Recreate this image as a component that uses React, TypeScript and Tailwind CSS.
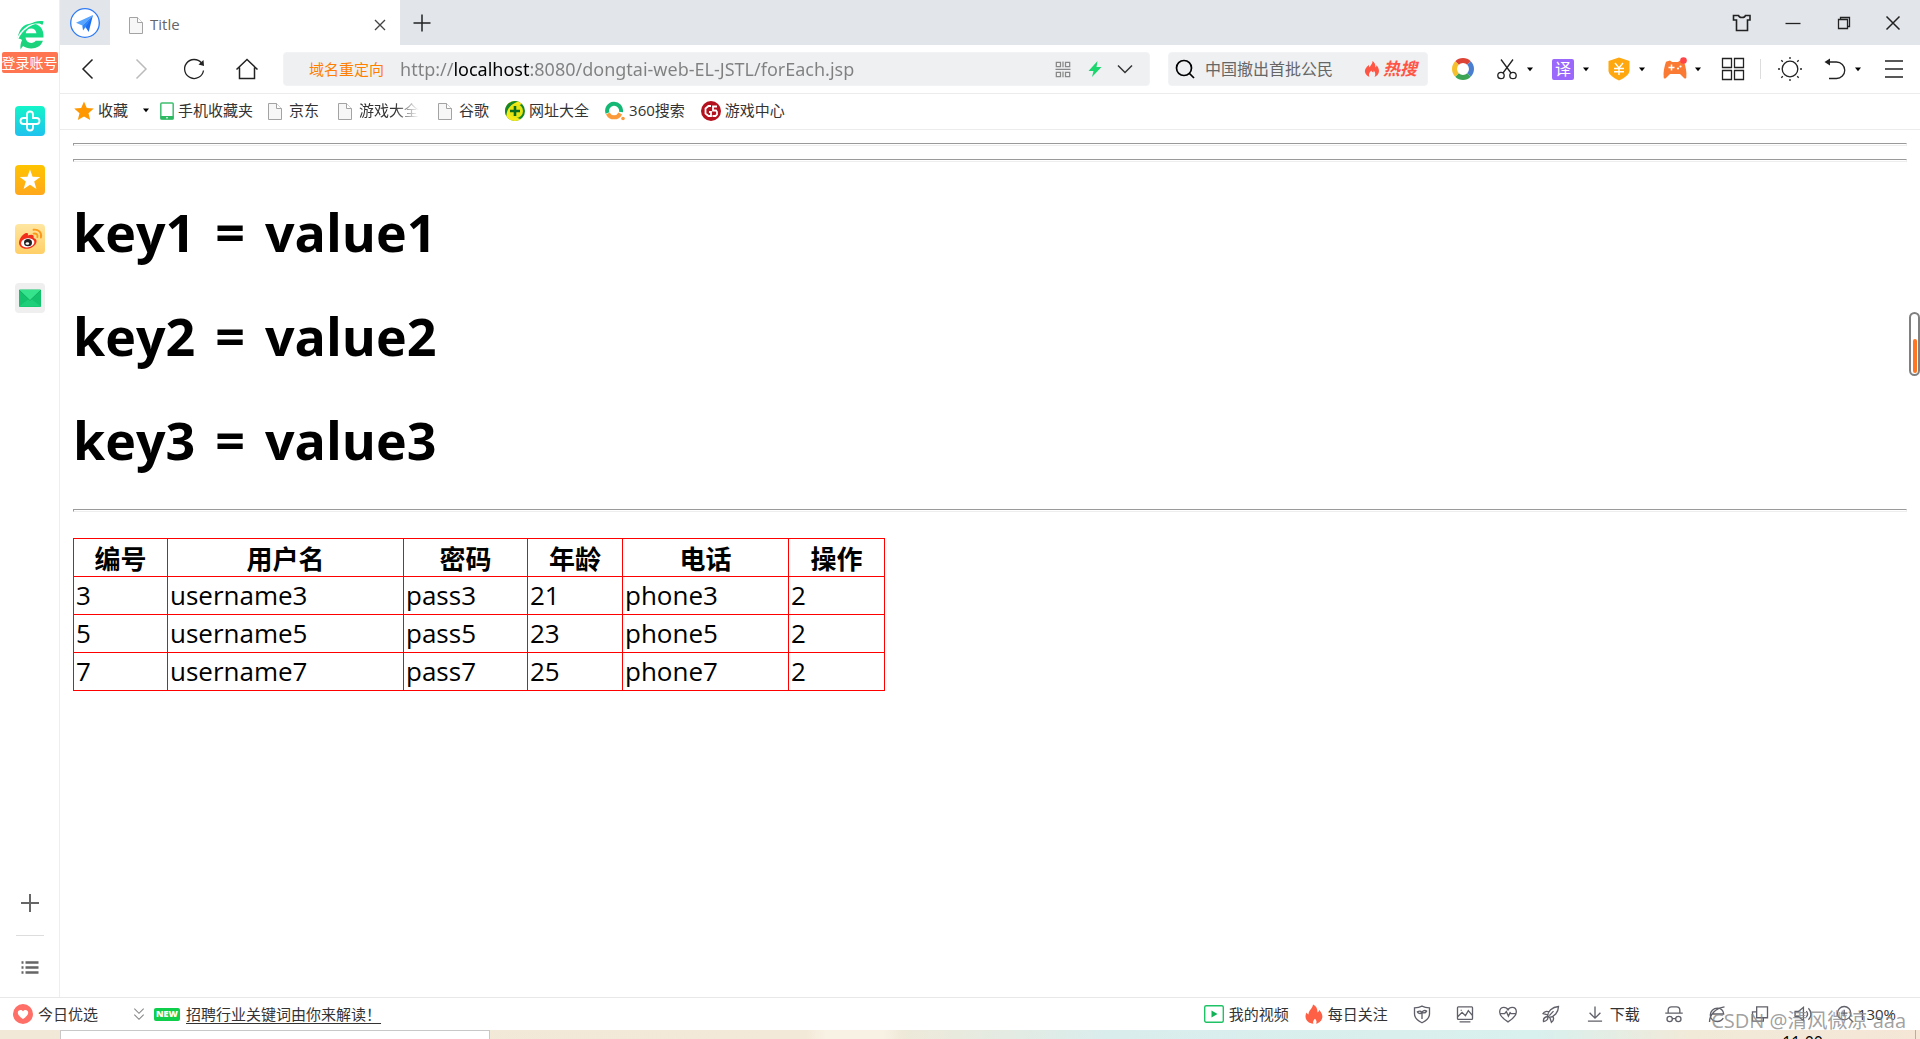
import React from 'react';

interface User {
  id: number;
  username: string;
  password: string;
  age: number;
  phone: string;
  action: number;
}

const users: User[] = [
  { id: 3, username: 'username3', password: 'pass3', age: 21, phone: 'phone3', action: 2 },
  { id: 5, username: 'username5', password: 'pass5', age: 23, phone: 'phone5', action: 2 },
  { id: 7, username: 'username7', password: 'pass7', age: 25, phone: 'phone7', action: 2 },
];

const columns = [
  { label: '编号', width: 'w-[94px]' },
  { label: '用户名', width: 'w-[236px]' },
  { label: '密码', width: 'w-[124px]' },
  { label: '年龄', width: 'w-[95px]' },
  { label: '电话', width: 'w-[166px]' },
  { label: '操作', width: 'w-[96px]' },
];

const entries = [
  { key: 'key1', value: 'value1' },
  { key: 'key2', value: 'value2' },
  { key: 'key3', value: 'value3' },
];

interface IconProps {
  size?: number;
  className?: string;
  width?: number;
  children: React.ReactNode;
}

// Line icon on a 24 unit grid
const Line: React.FC<IconProps> = ({ size = 24, width = 1.3, className = 'text-[#222]', children }) => (
  <svg
    width={size}
    height={size}
    viewBox="0 0 24 24"
    fill="none"
    stroke="currentColor"
    strokeWidth={width}
    className={`shrink-0 ${className}`}
    aria-hidden="true"
  >
    {children}
  </svg>
);

const Caret = () => (
  <svg width="8" height="5" viewBox="0 0 8 5" className="shrink-0 text-black" aria-hidden="true">
    <path d="M1 .5h6L4 4.2z" fill="currentColor" />
  </svg>
);

const FileIcon = () => (
  <svg width="20" height="20" viewBox="0 0 20 20" className="shrink-0" aria-hidden="true">
    <path d="M3.5 2.5h8l5 5v11h-13z" fill="#f7f7f7" stroke="#a3a3a3" />
    <path d="M11.5 2.5v5h5" fill="#fff" stroke="#a3a3a3" />
  </svg>
);

const BrowserLogo = () => (
  <svg width="30" height="30" viewBox="0 0 30 30" aria-hidden="true">
    <defs>
      <linearGradient id="logo" x1="0" y1="0" x2="0" y2="1">
        <stop offset="0" stopColor="#12e08a" />
        <stop offset="1" stopColor="#1fcf78" />
      </linearGradient>
    </defs>
    <path
      d="M28.500 17.500H10.500c.4 3.500 2.600 5.400 5.700 5.400 2 0 3.500-.7 4.400-2.100h7.300c-1.600 5-6 7.700-11.700 7.700-3.400 0-6-.9-8.100-2.400-1.200 1.300-2 2.400-2.400 3.500-.8-3-.1-6.600 1.300-9.700-1-1-2.600-1.400-4.400-1.200C3.600 9.500 8.500 4 16 3.500 23.700 3.100 29.300 8.500 28.500 17.500zM10.700 13.300h10.700c-.3-3-2.300-4.700-5.200-4.700-3 0-4.900 1.800-5.500 4.700z"
      fill="url(#logo)"
    />
    <path d="M1.500 24C2.500 14 12 3.500 27 1.800" fill="none" stroke="#fff" strokeWidth="1.600" />
    <path d="M14 4.800C18 2 23 .4 28.500 1.300c-.2 1.600-.6 2.800-1.400 4-.4-2-5-2.600-13.100-.5z" fill="url(#logo)" />
  </svg>
);

const SideApps = () => (
  <div className="mt-[33px] flex flex-col gap-[29px]">
    <button aria-label="健康" className="size-[30px]">
      <svg width="30" height="30" viewBox="0 0 30 30">
        <defs>
          <linearGradient id="teal" x1="0" y1="0" x2="0" y2="1">
            <stop offset="0" stopColor="#13f5c8" />
            <stop offset="1" stopColor="#1fc2ee" />
          </linearGradient>
        </defs>
        <rect width="30" height="30" rx="4" fill="url(#teal)" />
        <path
          d="M12 12H8.500a3 3 0 0 0 0 6H21.500a3 3 0 0 0 0-6H18V8.500a3 3 0 0 0-6 0V21.500a3 3 0 0 0 6 0V18"
          fill="none"
          stroke="#fff"
          strokeWidth="1.800"
          strokeLinecap="round"
        />
      </svg>
    </button>
    <button aria-label="收藏夹" className="size-[30px]">
      <svg width="30" height="30" viewBox="0 0 30 30">
        <defs>
          <linearGradient id="amber" x1="0" y1="0" x2="0" y2="1">
            <stop offset="0" stopColor="#ffc400" />
            <stop offset="1" stopColor="#ffa81c" />
          </linearGradient>
        </defs>
        <rect width="30" height="30" rx="4" fill="url(#amber)" />
        <path d="M15 4.500l2.600 7.200 7.700.2-6.100 4.700 2.200 7.400L15 19.700 8.600 24l2.200-7.400-6.100-4.700 7.700-.2z" fill="#fff" />
      </svg>
    </button>
    <button aria-label="微博" className="size-[30px]">
      <svg width="30" height="30" viewBox="0 0 30 30">
        <defs>
          <linearGradient id="sand" x1="0" y1="0" x2="0" y2="1">
            <stop offset="0" stopColor="#ffe6a0" />
            <stop offset="1" stopColor="#ffcf67" />
          </linearGradient>
        </defs>
        <rect width="30" height="30" rx="4" fill="url(#sand)" />
        <path
          d="M11.500 9c2 0 1.600 1.700 1.200 2.600 2.700-1.100 6.400-1.500 6 1.700-.1.700.1.800.9 1.100 5 2-.2 10.300-8 10.300C7 24.700 3.900 22 4 18.700 4.100 14.500 8.600 9.200 11.500 9z"
          fill="#f22f1d"
        />
        <ellipse cx="12.700" cy="18.800" rx="6.700" ry="4.600" transform="rotate(-8 12.700 18.800)" fill="#fff" />
        <ellipse cx="13" cy="18.700" rx="4" ry="3.600" fill="#222" />
        <ellipse cx="12.400" cy="19.500" rx="1.800" ry="1.300" fill="#fff" />
        <path d="M18.500 5.800c4.400-.9 8.800 2.600 7.400 7.700M18.600 9.600c2.600-.5 4.500 1.200 3.800 3.600" fill="none" stroke="#fb9a1a" strokeWidth="1.900" strokeLinecap="round" />
      </svg>
    </button>
    <button aria-label="邮箱" className="size-[30px]">
      <svg width="30" height="30" viewBox="0 0 30 30">
        <rect width="30" height="30" rx="4" fill="#efefef" />
        <rect x="4" y="6.500" width="22" height="17.500" rx="1" fill="#12c26c" />
        <path d="M4 23.500L15 15l11 8.500z" fill="#1dcf78" />
        <path d="M4 7l11 10.500L26 7z" fill="#35e38d" />
        <path d="M4 7l11 10.500L26 7" fill="none" stroke="#0fa95c" strokeWidth=".8" />
      </svg>
    </button>
  </div>
);

const Sidebar = () => (
  <aside className="flex w-[60px] shrink-0 flex-col items-center border-r border-[#eee] bg-white">
    <button className="mt-5 flex flex-col items-center">
      <BrowserLogo />
      <span className="mt-0.5 h-[21px] whitespace-nowrap rounded-xs bg-[#ff7451] text-sm leading-[21px] text-white">登录账号</span>
    </button>
    <SideApps />
    <div className="grow" />
    <button aria-label="添加">
      <Line width={2} className="text-[#666]"><path d="M12 3v18M3 12h18" /></Line>
    </button>
    <div className="mt-5 h-px w-7 bg-[#ddd]" />
    <button aria-label="列表" className="mt-5 mb-[17px]">
      <Line width={2.4} className="text-[#666]">
        <path d="M3.500 6.500h2M7.500 6.500h13M3.500 11.500h2M7.500 11.500h13M3.500 16.500h2M7.500 16.500h13" />
      </Line>
    </button>
  </aside>
);

const TabBar = () => (
  <header className="flex h-[45px] items-center bg-[#e2e5ea]">
    <button aria-label="导航" className="flex w-[50px] justify-center">
      <svg width="30" height="30" viewBox="0 0 30 30">
        <circle cx="15" cy="15" r="14.300" fill="#fff" stroke="#2f7cf6" strokeWidth="1.300" />
        <path d="M23 7L6 14.800l6.300 2.700z" fill="#57a5ff" />
        <path d="M23 7l-4.300 17-3.400-5.200-.3-.4z" fill="#1e6ff0" />
        <path d="M23 7L12.300 17.500l.7 5 2.500-3.300z" fill="#2f86fa" />
      </svg>
    </button>
    <div className="flex h-full w-[290px] items-center bg-white pt-1 pr-2.5 pl-4">
      <FileIcon />
      <span className="ml-1 grow text-[15px] text-[#666]">Title</span>
      <button aria-label="关闭标签">
        <Line size={20} width={1.600} className="text-[#444]"><path d="M6 6l12 12M18 6L6 18" /></Line>
      </button>
    </div>
    <button aria-label="新标签" className="ml-2.5">
      <Line width={1.500}><path d="M12 3.500v17M3.500 12h17" /></Line>
    </button>
    <div className="grow" />
    <button aria-label="皮肤" className="flex w-[51px] justify-center">
      <Line width={1.600}>
        <path d="M8.500 4.500c.7 2.600 6.300 2.600 7 0h4.500v4.500h-2.500v10.500h-11V9H3.500V4.500z" />
      </Line>
    </button>
    <button aria-label="最小化" className="flex w-[51px] justify-center">
      <Line><path d="M4.500 12.500h15" /></Line>
    </button>
    <button aria-label="还原" className="flex w-[51px] justify-center">
      <Line><path d="M6.500 8.500h9v9h-9zM8.500 8.500v-2h9v9h-2" /></Line>
    </button>
    <button aria-label="关闭" className="flex w-[51px] justify-center pr-1">
      <Line width={1.500}><path d="M5.500 5.500l13 13M18.500 5.500l-13 13" /></Line>
    </button>
  </header>
);

const Tool: React.FC<{ label: string; children: React.ReactNode }> = ({ label, children }) => (
  <button aria-label={label} className="flex shrink-0 items-center gap-[7px]">
    {children}
    <Caret />
  </button>
);

const NavBar = () => (
  <nav className="flex h-[49px] items-center border-b border-[#ececec] pr-[14px] pl-px">
    <button aria-label="后退" className="flex w-[53px] justify-center">
      <Line width={1.500}><path d="M16.500 2.500L7 12l9.500 9.500" /></Line>
    </button>
    <button aria-label="前进" className="flex w-[53px] justify-center">
      <Line width={1.500} className="text-[#bbb]"><path d="M7.500 2.500L17 12l-9.500 9.500" /></Line>
    </button>
    <button aria-label="刷新" className="flex w-[53px] justify-center">
      <Line>
        <path d="M21.500 13.500A9.500 9.500 0 1 1 19.500 6" />
        <path d="M16.500 7.500l5.500 1.500-.5-6z" fill="currentColor" stroke="none" />
      </Line>
    </button>
    <button aria-label="主页" className="flex w-[53px] justify-center">
      <Line width={1.500}><path d="M1.500 12.500L12 2.500l10.500 10M4.500 10.500v11h15v-11" /></Line>
    </button>

    <div className="ml-2.5 flex h-[34px] min-w-0 grow items-center rounded border border-[#f1f3f5] bg-[#eef0f2] pr-3 pl-[25px]">
      <label htmlFor="address" className="shrink-0 text-[15px] text-[#ff7f00]">域名重定向</label>
      <input
        id="address"
        defaultValue="http://localhost:8080/dongtai-web-EL-JSTL/forEach.jsp"
        className="ml-4 min-w-0 grow bg-[linear-gradient(90deg,#808080_53px,#000_53px,#000_130px,#808080_130px)] bg-clip-text font-['Noto_Sans',sans-serif] text-lg text-transparent caret-black outline-none"
      />
      <button aria-label="二维码">
        <Line size={20} width={1.500} className="text-[#888]">
          <path d="M4 4h5v5H4zM15 4h5v5h-5zM4 16h5v5H4zM15 16h5v5h-5zM12 3v7M12 15v7M3 12.500h18" />
        </Line>
      </button>
      <button aria-label="极速模式" className="ml-3">
        <svg width="20" height="20" viewBox="0 0 20 20">
          <path d="M12.500 2L3.500 12h5L7 18l9.500-10h-5z" fill="#1bd66c" />
        </svg>
      </button>
      <button aria-label="展开" className="ml-2">
        <Line size={24} width={1.500} className="text-[#333]"><path d="M5 8.500l7 7 7-7" /></Line>
      </button>
    </div>

    <div className="ml-[18px] flex h-[34px] w-[260px] shrink-0 items-center rounded border border-[#f1f3f5] bg-[#eef0f2] pl-1">
      <button aria-label="搜索">
        <Line width={1.700} className="text-black"><circle cx="11" cy="11" r="7.500" /><path d="M16.500 16.500l4.500 4.500" /></Line>
      </button>
      <input aria-label="搜索" placeholder="中国撤出首批公民" className="ml-2 w-0 grow text-base outline-none placeholder:text-[#666]" />
      <button className="mr-2.5 flex items-center gap-0.5 text-[17px] font-bold italic text-[#ff5544]">
        <svg width="18" height="18" viewBox="0 0 18 18" aria-hidden="true">
          <path
            d="M9.500 1c.3 2.700-2 4-2.800 6.300C6 6.700 5.800 5.700 6 4.700 3.500 7 1 9.700 2.300 13c.7 2 2.400 3.300 4.200 4-1.300-3 .2-4.700 1.900-6.500.3 1 .9 1.500 1.800 1.900.4-.6.6-1.200.5-2 1.900 2 2 4.600.8 6.600 2.500-1 4.500-3 4.500-5.900 0-2.500-1.300-4.400-2.300-5.900-.2 1-.6 1.700-1.300 2.200C12.600 4.700 11.700 2.500 9.500 1z"
            fill="#ff5544"
          />
        </svg>
        热搜
      </button>
    </div>

    <button aria-label="浏览器" className="mr-5 ml-[23px] shrink-0">
      <svg width="24" height="24" viewBox="0 0 24 24" fill="none" strokeWidth="5">
        <path d="M6 6a8.500 8.500 0 0 1 12 0" stroke="#de4436" />
        <path d="M18 6a8.500 8.500 0 0 1 0 12" stroke="#4a7fd0" />
        <path d="M18 18a8.500 8.500 0 0 1-12 0" stroke="#3ca455" />
        <path d="M6 18a8.500 8.500 0 0 1 0-12" stroke="#f6c02c" />
      </svg>
    </button>
    <div className="flex shrink-0 gap-[17px]">
      <Tool label="截图">
        <Line>
          <circle cx="6" cy="18.500" r="3.200" />
          <circle cx="18" cy="18.500" r="3.200" />
          <path d="M6 2.500l10 13.500M18 2.500L8 16" />
        </Line>
      </Tool>
      <Tool label="翻译">
        <span className="mx-px flex h-[21px] w-[22px] items-center justify-center rounded-xs bg-[#9a68fb] text-base leading-none text-white">译</span>
      </Tool>
      <Tool label="购物">
        <svg width="24" height="24" viewBox="0 0 24 24" fill="none">
          <path d="M12 .5l10.500 3.500v9.500c0 4-5 7.500-10.500 10-5.500-2.500-10.500-6-10.500-10V4z" fill="#ffa70f" />
          <path d="M8 6l4 5 4-5M7 11.500h10M7 14.800h10M12 11v7" stroke="#fff" strokeWidth="1.400" />
        </svg>
      </Tool>
      <Tool label="游戏">
        <svg width="24" height="24" viewBox="0 0 24 24" fill="none">
          <path d="M7 3.500l2 1.500h6l2-1.500 4 1.200C22.500 9 24 15 23.300 20.500c-.2 1.400-1.400 1.400-2.300.5l-4-4H7l-4 4c-.9.900-2.100.9-2.300-.5C0 15 1.500 9 3 4.700z" fill="#fb7a33" />
          <path d="M5.500 10.500h6M8.500 7.500v6" stroke="#fff" strokeWidth="1.500" />
          <circle cx="15" cy="11.500" r="1.100" fill="#fff" />
          <circle cx="17.500" cy="9.500" r="1.100" fill="#fff" />
          <circle cx="20.500" cy="3.500" r="3.300" fill="#ff4448" />
        </svg>
      </Tool>
    </div>
    <button aria-label="应用" className="ml-[19px] shrink-0">
      <Line><path d="M1.500 1.500h9v9h-9zM13.500 1.500h9v9h-9zM1.500 13.500h9v9h-9zM13.500 13.500h9v9h-9z" /></Line>
    </button>
    <div className="mr-[17px] ml-[15px] h-5 w-px shrink-0 bg-[#ddd]" />
    <button aria-label="护眼模式" className="mr-[21px] shrink-0">
      <Line>
        <circle cx="12" cy="12" r="7.800" />
        <path d="M12 0v2M12 22v2M0 12h2M22 12h2M3.300 3.300l1.500 1.500M19.200 19.200l1.500 1.500M3.300 20.700l1.500-1.500M19.200 4.800l1.500-1.500" />
      </Line>
    </button>
    <Tool label="恢复">
      <Line><path d="M3 5h10.500a8.200 8.200 0 0 1 0 16.500H6" /><path d="M1.500 5l5.500-3.500v7z" fill="currentColor" stroke="none" /></Line>
    </Tool>
    <button aria-label="菜单" className="ml-5 shrink-0">
      <Line width={1.600}><path d="M3 4h18M3 12h18M3 20h18" /></Line>
    </button>
  </nav>
);

const bookmarks = [
  { label: '京东', icon: <FileIcon /> },
  { label: '游戏大全', icon: <FileIcon />, faded: true },
  { label: '谷歌', icon: <FileIcon /> },
  {
    label: '网址大全',
    icon: (
      <svg width="20" height="20" viewBox="0 0 20 20" aria-hidden="true">
        <circle cx="10" cy="10" r="10" fill="#15862b" />
        <path d="M10 0A10 10 0 1 0 16 18C8 18 6 6 17 3A10 10 0 0 0 10 0z" fill="#f5ea18" />
        <path d="M13 .5A10 10 0 0 0 0 10c0 2 .5 3.500 1.500 5C1.500 8 6 3 13 .5z" fill="#15862b" />
        <circle cx="11" cy="10" r="7" fill="#e8e514" />
        <path d="M10 5v10M5 10h10" stroke="#0a6b20" strokeWidth="2.600" />
      </svg>
    ),
  },
  {
    label: '360搜索',
    icon: (
      <svg width="20" height="20" viewBox="0 0 20 20" fill="none" aria-hidden="true">
        <path d="M2.500 12A7 7 0 1 1 16 11" stroke="#14b874" strokeWidth="4" />
        <path d="M2.800 12.500a7 7 0 0 0 12.500 0" stroke="#fb9a3a" strokeWidth="4" />
        <circle cx="18" cy="17.500" r="1.800" fill="#fb9a3a" />
      </svg>
    ),
  },
  {
    label: '游戏中心',
    icon: (
      <svg width="20" height="20" viewBox="0 0 20 20" fill="none" aria-hidden="true">
        <circle cx="10" cy="10" r="10" fill="#b5121f" />
        <path d="M10 5H7.500L4.500 7.500v5L7.500 15H10v-4H8M16 5.500h-4v4h3l1 1.500v2.500L14.500 15H11.500" stroke="#fff" strokeWidth="1.800" />
      </svg>
    ),
  },
];

const BookmarkBar = () => (
  <div className="flex h-9 items-center gap-4 border-b border-[#ececec] pb-0.5 pl-[14px] text-[15px] text-[#333]">
    <button className="flex items-center gap-1">
      <svg width="20" height="20" viewBox="0 0 20 20" aria-hidden="true">
        <path d="M10 .5l2.800 6.500 7 .5-5.300 4.700L16.200 19 10 15.400 3.800 19l1.700-6.800L.2 7.500l7-.5z" fill="#ff9800" />
      </svg>
      收藏
      <span className="ml-2.5"><Caret /></span>
    </button>
    <a href="#mobile" className="-mr-1 -ml-1.5 flex items-center gap-1 whitespace-nowrap">
      <svg width="14" height="18" viewBox="0 0 14 18" aria-hidden="true">
        <rect x=".8" y="1" width="12.400" height="16" rx="1" fill="#fff" stroke="#3fbf6f" strokeWidth="1.500" />
        <path d="M.5 14h13v3.500H.5z" fill="#2fb862" />
        <path d="M6 15.800h2" stroke="#fff" />
      </svg>
      手机收藏夹
    </a>
    {bookmarks.map(b => (
      <a key={b.label} href="#bookmark" className="flex items-center gap-1 whitespace-nowrap">
        {b.icon}
        <span className={b.faded ? 'mask-r-from-60% mask-r-to-100%' : ''}>{b.label}</span>
      </a>
    ))}
  </div>
);

const Rule = () => <hr className="h-[3px] border border-t-[#9a9a9a] border-r-[#eee] border-b-[#eee] border-l-[#9a9a9a]" />;

const PageContent = () => (
  <main className="relative grow overflow-hidden bg-white px-[13px] pt-[13px] text-black">
    <Rule />
    <div className="mt-[13px]"><Rule /></div>
    <div className="mt-9 mb-[35px] flex flex-col gap-9">
      {entries.map(e => (
        <h1 key={e.key} className="flex gap-5 text-[52px] leading-[68px] font-bold">
          <span>{e.key}</span>
          <span>=</span>
          <span>{e.value}</span>
        </h1>
      ))}
    </div>
    <Rule />
    <table className="mt-[26px] w-[812px] table-fixed border-collapse border border-[#f00] text-[26px] leading-[33px]">
      <thead>
        <tr className="h-[38px]">
          {columns.map(c => (
            <th key={c.label} className={`${c.width} border border-[#f00] px-0.5 pt-1 font-bold`}>{c.label}</th>
          ))}
        </tr>
      </thead>
      <tbody>
        {users.map(u => (
          <tr key={u.id} className="h-[38px]">
            <td className="border border-[#f00] p-0.5">{u.id}</td>
            <td className="border border-[#f00] p-0.5">{u.username}</td>
            <td className="border border-[#f00] p-0.5">{u.password}</td>
            <td className="border border-[#f00] p-0.5">{u.age}</td>
            <td className="border border-[#f00] p-0.5">{u.phone}</td>
            <td className="border border-[#f00] p-0.5">{u.action}</td>
          </tr>
        ))}
      </tbody>
    </table>

    {/* Memory gauge floating on the right edge */}
    <div className="absolute top-[182px] right-0 flex h-16 w-[11px] items-end justify-center rounded-full border-2 border-[#808080] bg-white pb-px">
      <div className="h-[34px] w-1 rounded-full bg-[#ff7722]" />
    </div>
  </main>
);

const statusIcons = [
  {
    label: '安全',
    shape: <path d="M12 2.500c3 1.500 6 2 9 2.200V12c0 5-4 8-9 10.500C7 20 3 17 3 12V4.700c3-.2 6-.7 9-2.200zM12 18v-8M12 10.500c-2 1.500-4.500 1-5.500-1 2.500-1.500 4.500-1 5.500 1zM12 10c1-2 3.500-3 5.500-1.500-1 2-3.500 2.500-5.500 1.500z" />,
  },
  {
    label: '图片',
    shape: <path d="M4 3.500h16a1 1 0 0 1 1 1v13a1 1 0 0 1-1 1H4a1 1 0 0 1-1-1v-13a1 1 0 0 1 1-1zM3.500 15l5-5 4 4 3.500-6 5 6M7.500 7v1M5.500 21.500h13" />,
  },
  {
    label: '健康',
    shape: <path d="M12 21.500C5 17 2 13.500 2 9.500 2 6 4.300 4 7 4c2.200 0 4 1 5 3 1-2 2.800-3 5-3 2.700 0 5 2 5 5.500 0 4-3 7.500-10 12zM2.500 11.500H8l2-2.500 2.500 5.500 2-4 1 1h6" />,
  },
  {
    label: '加速',
    shape: <path d="M8 14c0-5 5-10.500 13-11-.2 7-5 12.500-11 13zM10 10c-3-2-6-1-7.500 1.500L8 13M14 14.500c2 3 1 5.500-1.500 7.500L10.500 16M3 21c-.5-3.500 1.500-5.500 5-6 1 3-1.500 6-5 6zM10 14l5-5.500" />,
  },
];

const modeIcons = [
  {
    label: '无痕',
    shape: <path d="M5 11V7.500c0-2.500 1.500-4 4-4h6c2.500 0 4 1.500 4 4V11M1.500 11h21M10 18a3.200 3.200 0 1 1-6.400 0 3.200 3.200 0 0 1 6.400 0zM20.400 18a3.200 3.200 0 1 1-6.400 0 3.200 3.200 0 0 1 6.400 0zM10 17.500h4" />,
  },
  {
    label: '内核',
    shape: <path d="M7 12h13c0-4-3.500-7-7.500-7C7.500 5 4 9 4 13c0 5 3.500 8 8.500 8 3 0 5.500-1.500 7-4M3 21.500C3 13 10 5 21 3.500" />,
  },
  {
    label: '窗口',
    shape: <path d="M8 3.500h13v13H8zM8 9.500H3v11h13v-4" />,
  },
  {
    label: '声音',
    shape: <path d="M2.500 9v6h4l6 5V4l-6 5zM16 8.500c1.700 2 1.700 5 0 7M18.500 5c4 4 4 10 0 14" />,
  },
];

const StatusBar = () => (
  <footer className="flex h-[33px] items-center border-t border-[#e8e8e8] bg-white pr-6 pl-[13px] text-[15px] text-[#333]">
    <button className="flex items-center gap-[5px] whitespace-nowrap">
      <svg width="20" height="20" viewBox="0 0 20 20" aria-hidden="true">
        <circle cx="10" cy="10" r="10" fill="#ff6f68" />
        <path d="M10 15C6.500 12.500 4.800 11 4.800 8.800c0-3 3.700-3.700 5.200-1.300 1.500-2.400 5.200-1.700 5.200 1.300 0 2.200-1.700 3.700-5.200 6.200z" fill="#fff" />
      </svg>
      今日优选
    </button>
    <button aria-label="收起" className="ml-[33px]">
      <Line size={16} width={1.600} className="text-[#888]"><path d="M5 4l7 7 7-7M5 13l7 7 7-7" /></Line>
    </button>
    <span className="ml-[7px] flex h-[13px] w-[26px] items-center justify-center rounded-xs bg-[#0fce4b] text-[9px] font-extrabold text-white">NEW</span>
    <a href="#news" className="ml-1.5 whitespace-nowrap underline underline-offset-3">招聘行业关键词由你来解读！</a>
    <div className="grow" />
    <button className="flex items-center gap-[5px] whitespace-nowrap">
      <svg width="20" height="20" viewBox="0 0 20 20" aria-hidden="true">
        <rect x=".7" y="1.700" width="18.600" height="16.600" rx="1.500" fill="#fff" stroke="#1fc366" strokeWidth="1.400" />
        <path d="M7.500 6.500L13.500 10l-6 3.500z" fill="#12b357" />
      </svg>
      我的视频
    </button>
    <button className="ml-[15px] flex items-center gap-1 whitespace-nowrap">
      <svg width="20" height="20" viewBox="0 0 20 20" aria-hidden="true">
        <path d="M9 .5c4 2 4.500 5 4.500 8 1-.5 1.500-1.500 1.500-2.800 3 3 4 6 3 9-1 2.800-3.500 4.500-6 5 1-2 .5-3.500-1-5-1.500 1.500-2.500 3-1.500 5C5 19.500 1.500 16.500 1.500 12.500c0-1.500.5-3 1-4 .5 1 1 1.500 2 2C4.500 6 8.500 5 9 .5z" fill="#fd6045" />
      </svg>
      每日关注
    </button>
    <div className="ml-[13px] flex">
      {statusIcons.map(i => (
        <button key={i.label} aria-label={i.label} className="flex w-[43px] justify-center">
          <Line size={20} width={1.600} className="text-[#60606a]">{i.shape}</Line>
        </button>
      ))}
    </div>
    <button className="ml-3 flex items-center gap-[5px] whitespace-nowrap">
      <Line size={20} width={1.600} className="text-[#60606a]"><path d="M12 3v14M5.500 10.500L12 17l6.500-6.500M3.500 20.500h17" /></Line>
      下载
    </button>
    <div className="mr-2.5 ml-[13px] flex">
      {modeIcons.map(i => (
        <button key={i.label} aria-label={i.label} className="flex w-[43px] justify-center">
          <Line size={20} width={1.600} className="text-[#60606a]">{i.shape}</Line>
        </button>
      ))}
    </div>
    <button className="flex items-center gap-[3px]">
      <Line size={20} width={1.600} className="text-[#60606a]"><circle cx="11" cy="11" r="8" /><path d="M17 17l5 5M11 7v8M7 11h8" /></Line>
      130%
    </button>
  </footer>
);

const Taskbar = () => (
  <div className="flex h-[9px] overflow-hidden bg-[linear-gradient(90deg,#f1e8d8_0%,#f3e9d9_42%,#f8f2e4_43%,#f8f2e4_46%,#eee9d9_47%,#d9eded_58%,#d8f0ee_80%,#f1ead9_88%,#f5e6d6_100%)] pl-[60px]">
    <div className="h-full w-[430px] border border-b-0 border-[#c8c8c8] bg-white" />
    <div className="grow" />
    <span className="mr-[92px] text-base text-black">11:00</span>
    <div className="mr-1 w-px bg-[#b9aea0]" />
  </div>
);

const App: React.FC = () => (
  <div className="relative flex h-screen flex-col overflow-hidden bg-white font-['Open_Sans','Noto_Sans_CJK_SC',sans-serif]">
    <div className="flex min-h-0 grow">
      <Sidebar />
      <div className="flex min-w-0 grow flex-col">
        <TabBar />
        <NavBar />
        <BookmarkBar />
        <PageContent />
      </div>
    </div>
    <StatusBar />
    <Taskbar />
    <span className="pointer-events-none absolute right-3.5 bottom-1 text-xl text-[#888]/80">CSDN @清风微凉 aaa</span>
  </div>
);

export default App;
